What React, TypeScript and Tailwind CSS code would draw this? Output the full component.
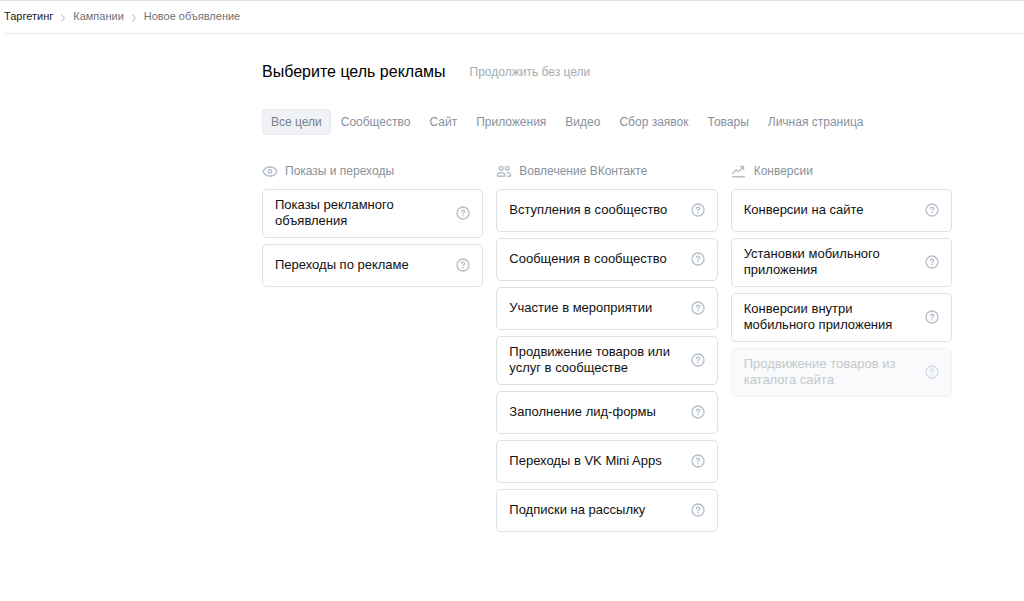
import { useState } from "react";

type Goal = { title: string; disabled?: boolean };

const tabs = [
  "Все цели",
  "Сообщество",
  "Сайт",
  "Приложения",
  "Видео",
  "Сбор заявок",
  "Товары",
  "Личная страница",
];

const views: Goal[] = [
  { title: "Показы рекламного объявления" },
  { title: "Переходы по рекламе" },
];

const engagement: Goal[] = [
  { title: "Вступления в сообщество" },
  { title: "Сообщения в сообщество" },
  { title: "Участие в мероприятии" },
  { title: "Продвижение товаров или услуг в сообществе" },
  { title: "Заполнение лид-формы" },
  { title: "Переходы в VK Mini Apps" },
  { title: "Подписки на рассылку" },
];

const conversions: Goal[] = [
  { title: "Конверсии на сайте" },
  { title: "Установки мобильного приложения" },
  { title: "Конверсии внутри мобильного приложения" },
  { title: "Продвижение товаров из каталога сайта", disabled: true },
];

function Chevron() {
  return (
    <svg className="mt-1 h-2 w-1" viewBox="0 0 4 8" fill="none" stroke="#a9adb3">
      <path d="M.7.5 C1.2 2.2 3.2 3 3.2 4 S1.2 5.8.7 7.5" />
    </svg>
  );
}

function EyeIcon() {
  return (
    <svg className="size-4" viewBox="0 0 16 16" fill="none" stroke="#b4bdca" strokeWidth="1.4">
      <path d="M1.2 8.5C2.3 5.500 5 4 8 4s5.700 1.500 6.800 4.500C13.700 11.500 11 13 8 13S2.300 11.500 1.200 8.500Z" />
      <circle cx="8" cy="8.500" r="1.700" />
    </svg>
  );
}

function UsersIcon() {
  return (
    <svg className="size-4" viewBox="0 0 16 16" fill="none" stroke="#b4bdca" strokeWidth="1.4">
      <circle cx="5.200" cy="5.300" r="1.900" />
      <circle cx="11.300" cy="5.300" r="1.900" />
      <path d="M1.400 12.600v-.7C1.400 10.300 3.100 9.600 5.200 9.600S9 10.300 9 11.900v.7c0 .4-.2.600-.600.600H2c-.4 0-.6-.2-.6-.6Z" />
      <path d="M10.600 9.600c2.400-.1 4.100.7 4.100 2.300v.7c0 .4-.2.6-.6.6h-2.900" />
    </svg>
  );
}

function ChartIcon() {
  return (
    <svg className="size-4" viewBox="0 0 16 16" fill="none" stroke="#b4bdca" strokeWidth="1.400" strokeLinecap="round" strokeLinejoin="round">
      <path d="M1.800 10.200 5 6.900l2.500 1.900 4.800-4.900M9.300 3.500h3.300v3.200M1.800 13.700h11.600" />
    </svg>
  );
}

function HelpIcon() {
  return (
    <svg className="size-[14px] shrink-0" viewBox="0 0 14 14" fill="none" stroke="#b4bdca" strokeWidth="1.300">
      <circle cx="7" cy="7" r="6" />
      <path d="M5.400 5.600c0-1 .7-1.500 1.600-1.500s1.600.6 1.600 1.400c0 1.200-1.600 1.200-1.600 2.300" strokeLinecap="round" />
      <circle cx="7" cy="9.700" r=".8" fill="#b4bdca" stroke="none" />
    </svg>
  );
}

function Column({ icon, title, goals }: { icon: React.ReactNode; title: string; goals: Goal[] }) {
  return (
    <section className="min-w-0 flex-1">
      <h2 className="flex items-center gap-[7px] text-[12px] leading-4 text-[#87919e]">
        {icon}
        {title}
      </h2>
      <div className="mt-[10px] flex flex-col gap-[6px]">
        {goals.map((goal) => (
          <button
            key={goal.title}
            disabled={goal.disabled}
            className="flex min-h-[43px] w-full items-center justify-between gap-4 rounded-[5px] border border-[#dce1e6] bg-white px-3 pt-[7px] pb-2 text-left text-[13px] leading-4 text-[#111] disabled:border-[#f0f2f4] disabled:bg-[#f9fafb] disabled:text-[#c5c8cc] disabled:[&>svg]:opacity-50"
          >
            <span>{goal.title}</span>
            <HelpIcon />
          </button>
        ))}
      </div>
    </section>
  );
}

export default function App() {
  const [active, setActive] = useState(tabs[0]);

  return (
    <div className="border-t border-[#dfe3e8] bg-white font-['Liberation_Sans',Arial,sans-serif]">
      <nav className="ml-1 flex h-[33px] items-center gap-2 border-b border-[#e9ebee] pb-[3px] text-[11px] leading-4 text-[#6d7278]">
        <a href="#" className="text-[#222]">Таргетинг</a>
        <Chevron />
        <a href="#">Кампании</a>
        <Chevron />
        <span>Новое объявление</span>
      </nav>

      <main className="pl-[190px]">
        <div className="mx-auto max-w-[690px] pt-7">
          <div className="flex items-center gap-6">
            <h1 className="text-[16px] leading-5 text-black">Выберите цель рекламы</h1>
            <a href="#" className="text-[12px] leading-4 text-[#a3abb5]">Продолжить без цели</a>
          </div>

          <div className="mt-[27px] flex gap-px">
            {tabs.map((tab) => (
              <button
                key={tab}
                onClick={() => setActive(tab)}
                className={
                  tab === active
                    ? "h-[26px] rounded-[4px] border border-[#e6e9ed] bg-[#f0f2f5] px-2 text-[12px] text-[#76808c]"
                    : "h-[26px] rounded-[4px] border border-transparent px-2 text-[12px] text-[#87919e]"
                }
              >
                {tab}
              </button>
            ))}
          </div>

          <div className="mt-7 flex items-start gap-[13px]">
            <Column icon={<EyeIcon />} title="Показы и переходы" goals={views} />
            <Column icon={<UsersIcon />} title="Вовлечение ВКонтакте" goals={engagement} />
            <Column icon={<ChartIcon />} title="Конверсии" goals={conversions} />
          </div>
        </div>
      </main>
    </div>
  );
}
